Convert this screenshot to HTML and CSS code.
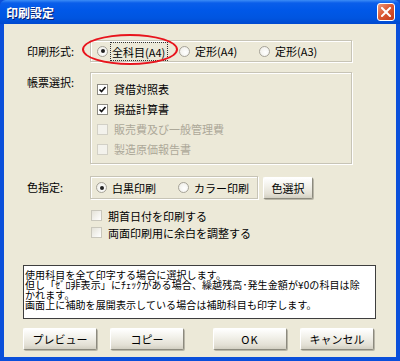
FILE: index.html
```html
<!DOCTYPE html>
<html lang="ja">
<head>
    <meta charset="UTF-8">
    <title>印刷設定</title>
    <link rel="stylesheet" href="styles.css">
</head>
<body>
    <div class="window">
        <div class="titlebar">
            <span class="title">印刷設定</span>
            <span class="close">
                <svg width="10" height="10" viewBox="0 0 10 10"><path d="M1 1 L9 9 M9 1 L1 9" stroke="#fff" stroke-width="2" stroke-linecap="square"/></svg>
            </span>
        </div>
        <div class="frame">
            <div class="client">
                <!-- 印刷形式 -->
                <div class="row row-form">
                    <div class="label">印刷形式:</div>
                    <div class="group group-form">
                        <div class="opt opt-1"><span class="radio on"></span><span class="focus">全科目(A4)</span></div>
                        <div class="opt opt-2"><span class="radio"></span><span>定形(A4)</span></div>
                        <div class="opt"><span class="radio"></span><span>定形(A3)</span></div>
                    </div>
                </div>

                <!-- 帳票選択 -->
                <div class="row row-sheets">
                    <div class="label label-top">帳票選択:</div>
                    <div class="group group-sheets">
                        <div class="check-row"><span class="check on"><svg width="9" height="9" viewBox="0 0 9 9"><path d="M1.5 4.5 L3.5 6.5 L7.5 2" fill="none" stroke="#111" stroke-width="1.6"/></svg></span><span>貸借対照表</span></div>
                        <div class="check-row"><span class="check on"><svg width="9" height="9" viewBox="0 0 9 9"><path d="M1.5 4.5 L3.5 6.5 L7.5 2" fill="none" stroke="#111" stroke-width="1.6"/></svg></span><span>損益計算書</span></div>
                        <div class="check-row disabled"><span class="check"></span><span>販売費及び一般管理費</span></div>
                        <div class="check-row disabled"><span class="check"></span><span>製造原価報告書</span></div>
                    </div>
                </div>

                <!-- 色指定 -->
                <div class="row row-color">
                    <div class="label">色指定:</div>
                    <div class="group group-color">
                        <div class="opt opt-c1"><span class="radio on"></span><span>白黒印刷</span></div>
                        <div class="opt"><span class="radio"></span><span>カラー印刷</span></div>
                    </div>
                    <button class="btn btn-color">色選択</button>
                </div>

                <div class="options">
                    <div class="check-row"><span class="check plain"></span><span>期首日付を印刷する</span></div>
                    <div class="check-row"><span class="check plain"></span><span>両面印刷用に余白を調整する</span></div>
                </div>

                <div class="desc">
                    <div>使用科目を全て印字する場合に選択します。</div>
                    <div>但し「ｾﾞﾛ非表示」にﾁｪｯｸがある場合、繰越残高･発生金額が¥0の科目は除</div>
                    <div>かれます。</div>
                    <div>画面上に補助を展開表示している場合は補助科目も印字します。</div>
                </div>

                <div class="buttons">
                    <button class="btn">プレビュー</button>
                    <button class="btn">コピー</button>
                    <button class="btn btn-ok">OK</button>
                    <button class="btn">キャンセル</button>
                </div>

                <!-- annotation -->
                <div class="mark"></div>
            </div>
        </div>
    </div>
</body>
</html>
```

FILE: styles.css
```css
/* Global */
html, body {
    margin: 0;
    padding: 0;
}
body {
    width: 400px;
    height: 361px;
    overflow: hidden;
    font-family: "Noto Sans CJK JP", "Liberation Sans", sans-serif;
    font-size: 11px;
    color: #000;
}

/* Window frame */
.window {
    width: 400px;
    height: 361px;
    display: flex;
    flex-direction: column;
    background: #0A4FDA;
}
.titlebar {
    height: 24px;
    flex: none;
    display: flex;
    align-items: center;
    justify-content: space-between;
    padding: 0 5px 0 6px;
    border-radius: 6px 6px 0 0;
    background: linear-gradient(to bottom, #3C8CF6 0px, #0A5EEA 3px, #0058E8 10px, #0055E0 18px, #0049CF 24px);
}
.title {
    color: #fff;
    font-weight: bold;
    font-size: 12px;
    text-shadow: 1px 1px 0 #0A1E70;
}
.close {
    width: 16px;
    height: 16px;
    display: flex;
    align-items: center;
    justify-content: center;
    border: 1px solid #fff;
    border-radius: 3px;
    background: linear-gradient(to bottom right, #EE9A7E, #DC5A34 45%, #C23A1A);
}
.frame {
    flex: 1;
    padding: 0 4px 4px 4px;
}
.client {
    position: relative;
    height: 100%;
    background: #ECE9D8;
    padding-top: 16px;
    box-sizing: border-box;
}

/* Rows with label + group */
.row {
    display: flex;
    align-items: flex-start;
    padding-left: 23px;
}
.label {
    width: 63px;
    line-height: 22px;
    flex: none;
}
.label-top {
    line-height: 20px;
}
.group {
    box-sizing: border-box;
    border: 1px solid #C7C4B6;
    box-shadow: 1px 1px 0 #fff, inset 1px 1px 0 #fff;
}
.group-form {
    width: 262px;
    height: 22px;
    display: flex;
    align-items: center;
    padding-left: 6px;
}
.row-sheets {
    margin-top: 10px;
}
.group-sheets {
    width: 262px;
    height: 92px;
    padding: 6px 0 0 6px;
}
.row-color {
    margin-top: 12px;
}
.group-color {
    width: 168px;
    height: 23px;
    display: flex;
    align-items: center;
    padding-left: 5px;
}

/* Radio buttons */
.opt {
    display: flex;
    align-items: center;
    white-space: nowrap;
}
.opt-1 {
    width: 82px;
}
.opt-2 {
    width: 80px;
}
.opt-c1 {
    width: 82px;
}
.radio {
    width: 9px;
    height: 9px;
    border-radius: 50%;
    border: 1px solid #A6A398;
    background: radial-gradient(circle at 60% 60%, #fff, #ECEBE4);
    margin-right: 5px;
    position: relative;
    flex: none;
}
.radio.on::after {
    content: "";
    position: absolute;
    left: 2.5px;
    top: 2.5px;
    width: 4px;
    height: 4px;
    border-radius: 50%;
    background: #222;
}
.focus {
    outline: 1px dotted #333;
    padding: 1px 2px 0 1px;
    margin-left: -2px;
}

/* Check boxes */
.check-row {
    display: flex;
    align-items: center;
    height: 20px;
    white-space: nowrap;
}
.check {
    width: 9px;
    height: 9px;
    border: 1px solid #8D8B83;
    background: #fff;
    margin-right: 6px;
    display: flex;
    align-items: center;
    justify-content: center;
    flex: none;
}
.check svg {
    display: block;
}
.disabled {
    color: #ACA899;
}
.disabled .check {
    border-color: #D2D0C6;
    background: #F3F2EC;
}
.check.plain {
    border-color: #C9C7BC;
    background: linear-gradient(to bottom right, #E4E2D8, #fff);
}
.options {
    margin-top: 8px;
    margin-left: 87px;
}
.options .check-row {
    height: 17px;
}

/* Text description */
.desc {
    margin: 24px 0 0 19px;
    width: 353px;
    height: 54px;
    box-sizing: border-box;
    border: 1px solid #3E3E3E;
    background: #fff;
    font-size: 10px;
    line-height: 10px;
    padding: 4px 0 0 1px;
    letter-spacing: 0.1px;
    white-space: nowrap;
    overflow: hidden;
}

/* Buttons */
.btn {
    width: 74px;
    height: 22px;
    font-family: inherit;
    font-size: 11px;
    padding: 0;
    color: #000;
    border: 1px solid;
    border-color: #FFFFFF #8C8A7E #8C8A7E #FFFFFF;
    border-radius: 2px;
    background: linear-gradient(to bottom, #FFFFFF, #F2F1EA 40%, #E3E0D5 80%, #D2CFC2);
    box-shadow: 1px 1px 0 #B9B6A8;
}
.btn-color {
    width: 50px;
    margin: 1px 0 0 5px;
}
.buttons {
    margin: 9px 0 0 19px;
    display: flex;
    gap: 13px;
}
.btn-ok {
    margin-left: 16px;
    letter-spacing: 1px;
}

/* red annotation ellipse */
.mark {
    position: absolute;
    left: 78px;
    top: 10px;
    width: 92px;
    height: 27px;
    border: 2px solid #E8141C;
    border-radius: 50%;
}
```
